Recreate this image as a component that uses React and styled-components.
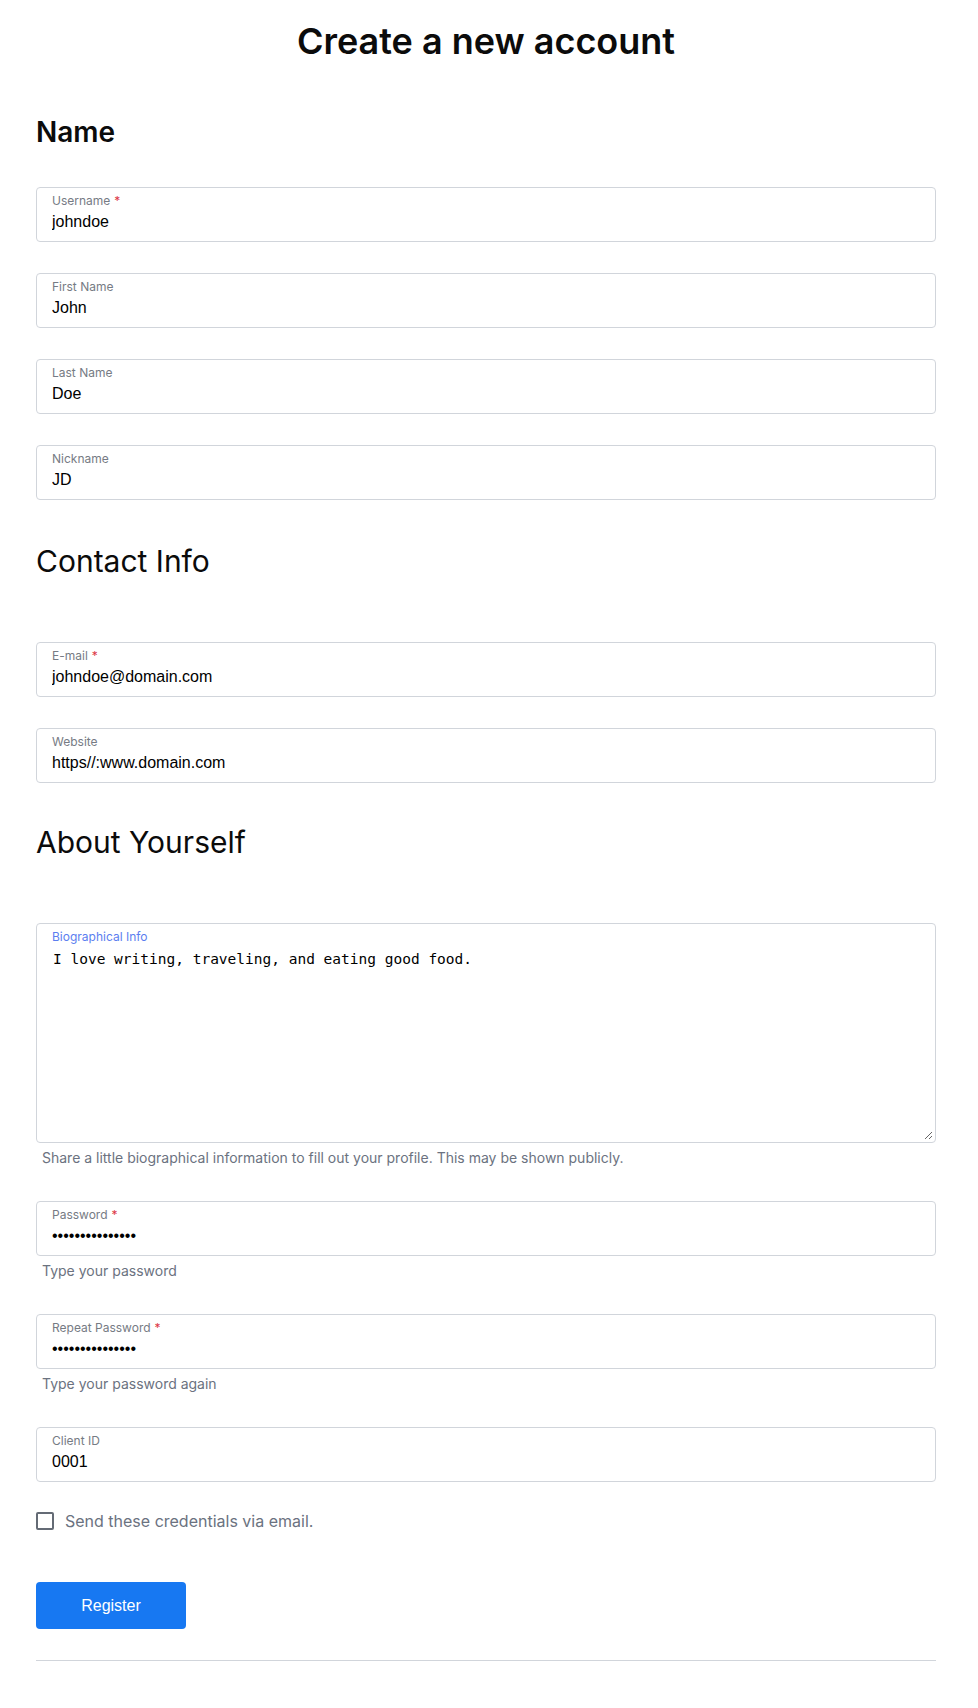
import React from "react";
import styled, { createGlobalStyle } from "styled-components";

const GlobalStyle = createGlobalStyle`
  body {
    margin: 0;
    background: #fff;
    font-family: Inter, "Noto Sans", sans-serif;
    color: #111;
  }
`;

const Page = styled.div`
  width: 900px;
  margin-left: 36px;
  padding: 21px 0 47px;
`;

const Title = styled.h1`
  margin: 0;
  text-align: center;
  font-size: 36px;
  line-height: 41px;
  font-weight: 600;
  color: #0b0b0b;
`;

const SectionHeading = styled.h2`
  margin: ${(p) => p.$top}px 0 0;
  font-size: ${(p) => (p.$bold ? 28 : 30)}px;
  line-height: ${(p) => (p.$bold ? 34 : 36)}px;
  font-weight: ${(p) => (p.$bold ? 600 : 400)};
  color: #0b0b0b;
`;

const Stack = styled.div`
  display: flex;
  flex-direction: column;
  gap: 31px;
  margin-top: ${(p) => p.$top}px;
`;

const Group = styled.div`
  display: flex;
  flex-direction: column;
`;

const Box = styled.div`
  border: 1px solid #d1d5db;
  border-radius: 4px;
  padding: ${(p) => (p.$area ? "5px 2px 2px 15px" : "5px 15px 10px")};
  background: #fff;
`;

const Label = styled.label`
  display: block;
  font-size: 12px;
  line-height: 16px;
  color: ${(p) => (p.$active ? "#5b7ef0" : "#767b84")};
`;

const Required = styled.span`
  color: #dc3545;
  margin-left: 4px;
`;

const Input = styled.input`
  display: block;
  width: 100%;
  height: 18px;
  margin-top: 4px;
  padding: 0;
  border: none;
  outline: none;
  background: transparent;
  font-family: "Liberation Sans", Arial, sans-serif;
  font-size: 16px;
  line-height: 18px;
  color: #000;
`;

const TextArea = styled.textarea`
  display: block;
  width: 100%;
  box-sizing: border-box;
  height: 191px;
  margin-top: 4px;
  padding: 2px 0 0 1px;
  border: none;
  outline: none;
  resize: vertical;
  background: transparent;
  font-family: "DejaVu Sans Mono", "Liberation Mono", monospace;
  font-size: 14.5px;
  color: #000;
`;

const Helper = styled.div`
  margin: 4px 0 1px 6px;
  font-size: 14px;
  line-height: 22px;
  color: #6b7280;
`;

const CheckRow = styled.label`
  display: flex;
  align-items: center;
  gap: 11px;
  margin-top: 27px;
  font-size: 16px;
  line-height: 24px;
  color: #6b7280;
`;

const Check = styled.input`
  appearance: none;
  width: 18px;
  height: 18px;
  margin: 0;
  box-sizing: border-box;
  border: 2px solid #646b75;
  border-radius: 2px;
  background: #fff;
`;

const Button = styled.button`
  display: block;
  width: 150px;
  height: 47px;
  margin-top: 49px;
  border: none;
  border-radius: 4px;
  background: #1778f2;
  color: #fff;
  font-family: "Liberation Sans", Arial, sans-serif;
  font-size: 16px;
`;

const Rule = styled.hr`
  margin: 31px 0 0;
  border: none;
  border-top: 1px solid #d1d5db;
`;

function Field({ label, value, required, type = "text", help }) {
  return (
    <Group>
      <Box>
        <Label>
          {label}
          {required && <Required>*</Required>}
        </Label>
        <Input type={type} defaultValue={value} />
      </Box>
      {help && <Helper>{help}</Helper>}
    </Group>
  );
}

export default function App() {
  return (
    <>
      <GlobalStyle />
      <Page>
        <Title>Create a new account</Title>

        <SectionHeading $bold $top={53}>Name</SectionHeading>
        <Stack $top={38}>
          <Field label="Username" value="johndoe" required />
          <Field label="First Name" value="John" />
          <Field label="Last Name" value="Doe" />
          <Field label="Nickname" value="JD" />
        </Stack>

        <SectionHeading $top={43}>Contact Info</SectionHeading>
        <Stack $top={63}>
          <Field label="E-mail" value="johndoe@domain.com" required />
          <Field label="Website" value="https//:www.domain.com" />
        </Stack>

        <SectionHeading $top={41}>About Yourself</SectionHeading>
        <Stack $top={63}>
          <Group>
            <Box $area>
              <Label $active>Biographical Info</Label>
              <TextArea defaultValue="I love writing, traveling, and eating good food." />
            </Box>
            <Helper>
              Share a little biographical information to fill out your profile. This may be shown publicly.
            </Helper>
          </Group>
          <Field
            label="Password"
            value="johndoepassword"
            type="password"
            required
            help="Type your password"
          />
          <Field
            label="Repeat Password"
            value="johndoepassword"
            type="password"
            required
            help="Type your password again"
          />
          <Field label="Client ID" value="0001" />
        </Stack>

        <CheckRow>
          <Check type="checkbox" />
          Send these credentials via email.
        </CheckRow>

        <Button type="button">Register</Button>
        <Rule />
      </Page>
    </>
  );
}
